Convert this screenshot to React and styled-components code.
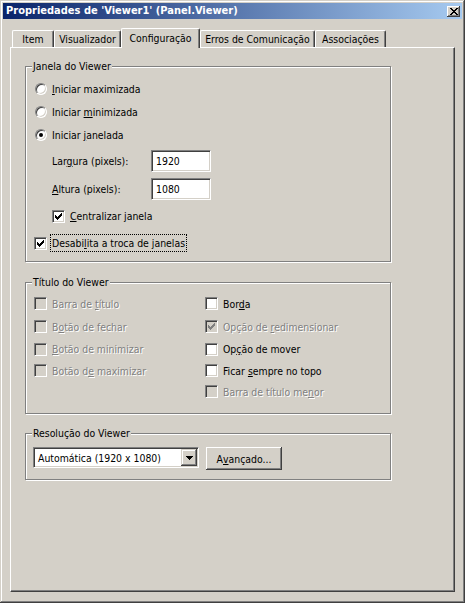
import React from "react";
import styled, { createGlobalStyle } from "styled-components";

const FACE = `"DejaVu Sans Condensed", "DejaVu Sans", "Liberation Sans", sans-serif`;

const Global = createGlobalStyle`
  html, body { margin: 0; padding: 0; background: #D4D0C8; }
  #root { width: 465px; height: 603px; }
  * { box-sizing: border-box; }
`;

const Window = styled.div`
  width: 465px;
  height: 603px;
  background: #d4d0c8;
  padding: 3px;
  display: flex;
  flex-direction: column;
  box-shadow: inset -1px -1px 0 #404040, inset 1px 1px 0 #d4d0c8,
    inset -2px -2px 0 #808080, inset 2px 2px 0 #ffffff;
  font-family: ${FACE};
  font-size: 10.4px;
  line-height: 12px;
  color: #000;
`;

const TitleBar = styled.div`
  flex: none;
  height: 16px;
  display: flex;
  align-items: center;
  justify-content: space-between;
  padding: 0 2px 0 3px;
  background: linear-gradient(to right, #0a246a, #a6caf0);
`;

const TitleText = styled.span`
  color: #fff;
  font-weight: bold;
  font-size: 11px;
  white-space: nowrap;
`;

const CloseButton = styled.div`
  width: 13px;
  height: 11px;
  background: #d4d0c8;
  box-shadow: inset -1px -1px 0 #404040, inset 1px 1px 0 #fff,
    inset -2px -2px 0 #808080;
  display: flex;
  align-items: center;
  justify-content: center;
`;

const Body = styled.div`
  flex: 1;
  display: flex;
  flex-direction: column;
  padding: 9px 7px 8px 7px;
`;

const TabRow = styled.div`
  flex: none;
  height: 19px;
  display: flex;
  align-items: flex-end;
  padding-left: 2px;
  position: relative;
  z-index: 1;
`;

const Tab = styled.div`
  width: ${(p) => p.$w}px;
  height: ${(p) => (p.$active ? 20 : 17)}px;
  margin-bottom: ${(p) => (p.$active ? -1 : 0)}px;
  padding-bottom: ${(p) => (p.$active ? 2 : 0)}px;
  background: #d4d0c8;
  border-top: 1px solid #fff;
  border-left: 1px solid #fff;
  border-right: 1px solid #404040;
  border-radius: 2px 2px 0 0;
  box-shadow: inset -1px 0 0 #808080;
  display: flex;
  align-items: center;
  justify-content: center;
  white-space: nowrap;
`;

const Panel = styled.div`
  flex: 1;
  border-top: 1px solid #fff;
  border-left: 1px solid #fff;
  border-right: 1px solid #404040;
  border-bottom: 1px solid #404040;
  box-shadow: inset -1px -1px 0 #808080;
  padding: 18px 14px;
  display: flex;
  flex-direction: column;
`;

const Group = styled.div`
  position: relative;
  width: 366px;
  border: 1px solid #808080;
  box-shadow: inset 1px 1px 0 #fff, 1px 1px 0 #fff;
  margin-top: ${(p) => p.$mt || 0}px;
  padding: ${(p) => p.$pad};
  display: flex;
  flex-direction: column;
`;

const Caption = styled.span`
  position: absolute;
  top: -7px;
  left: 6px;
  padding: 0 1px;
  background: #d4d0c8;
  line-height: 13px;
  white-space: nowrap;
`;

const OptionRow = styled.div`
  display: flex;
  align-items: center;
  height: ${(p) => (p.$h ? `${p.$h}px` : "100%")};
  margin-top: ${(p) => p.$mt || 0}px;
  padding-left: ${(p) => p.$indent || 0}px;
  color: ${(p) => (p.$disabled ? "#808080" : "#000")};
  text-shadow: ${(p) => (p.$disabled ? "1px 1px 0 #fff" : "none")};
  white-space: nowrap;
`;

const OptionLabel = styled.span`
  margin-left: ${(p) => (p.$focus ? 3 : 5)}px;
  padding: ${(p) => (p.$focus ? "2px 1px" : "0")};
  border: ${(p) => (p.$focus ? "1px dotted #000" : "none")};
`;

const Key = styled.u`
  text-decoration: underline;
  text-underline-offset: 1px;
`;

const CheckBoxBox = styled.span`
  flex: none;
  width: 13px;
  height: 13px;
  display: flex;
  align-items: center;
  justify-content: center;
  background: ${(p) => (p.$disabled ? "#d4d0c8" : "#fff")};
  border: 1px solid;
  border-color: #808080 #fff #fff #808080;
  box-shadow: inset 1px 1px 0 #404040, inset -1px -1px 0 #d4d0c8;
`;

const RadioCircle = styled.span`
  flex: none;
  width: 12px;
  height: 12px;
  margin-left: 1px;
  border-radius: 50%;
  background: #fff;
  border: 1px solid;
  border-color: #808080 #fff #fff #808080;
  box-shadow: inset 1px 1px 0 #404040, inset -1px -1px 0 #d4d0c8;
  display: flex;
  align-items: center;
  justify-content: center;
`;

const RadioDot = styled.span`
  width: 4px;
  height: 4px;
  border-radius: 50%;
  background: #000;
`;

const FieldRow = styled.div`
  display: flex;
  align-items: center;
  height: 22px;
  margin-top: ${(p) => p.$mt || 0}px;
  padding-left: 18px;
`;

const FieldLabel = styled.span`
  width: 99px;
  flex: none;
`;

const Sunken = styled.div`
  border: 1px solid;
  border-color: #808080 #fff #fff #808080;
  box-shadow: inset 1px 1px 0 #404040, inset -1px -1px 0 #d4d0c8;
  background: #fff;
`;

const TextBox = styled(Sunken)`
  width: 60px;
  height: 22px;
  padding-left: 4px;
  display: flex;
  align-items: center;
`;

const CheckGrid = styled.div`
  display: grid;
  grid-template-columns: 171px 1fr;
  grid-template-rows: 23px 23px 22px 21px 21px;
  grid-auto-flow: column;
`;

const ControlRow = styled.div`
  display: flex;
  align-items: flex-start;
  gap: 7px;
  height: 23px;
`;

const Combo = styled(Sunken)`
  width: 166px;
  height: 21px;
  display: flex;
  align-items: center;
  padding: 1px;
`;

const ComboText = styled.span`
  flex: 1;
  padding-left: 3px;
  white-space: nowrap;
`;

const DropButton = styled.span`
  width: 16px;
  height: 17px;
  background: #d4d0c8;
  box-shadow: inset -1px -1px 0 #404040, inset 1px 1px 0 #d4d0c8,
    inset -2px -2px 0 #808080, inset 2px 2px 0 #fff;
  display: flex;
  align-items: center;
  justify-content: center;
`;

const PushButton = styled.div`
  width: 76px;
  height: 23px;
  background: #d4d0c8;
  box-shadow: inset -1px -1px 0 #404040, inset 1px 1px 0 #fff,
    inset -2px -2px 0 #808080, inset 2px 2px 0 #d4d0c8;
  display: flex;
  align-items: center;
  justify-content: center;
  white-space: nowrap;
`;

const CheckMark = ({ color }) => (
  <svg width="7" height="7" viewBox="0 0 7 7" shapeRendering="crispEdges">
    {[2, 3, 4, 3, 2, 1, 0].map((y, x) => (
      <rect key={x} x={x} y={y} width="1" height="3" fill={color} />
    ))}
  </svg>
);

const CloseGlyph = () => (
  <svg width="8" height="7" viewBox="0 0 8 7" shapeRendering="crispEdges">
    {[0, 1, 2, 3, 4, 5, 6].map((r) => (
      <g key={r}>
        <rect x={r} y={r} width="2" height="1" fill="#000" />
        <rect x={6 - r} y={r} width="2" height="1" fill="#000" />
      </g>
    ))}
  </svg>
);

const DownArrow = () => (
  <svg width="7" height="4" viewBox="0 0 7 4" shapeRendering="crispEdges">
    <path d="M0 0h7v1H0zM1 1h5v1H1zM2 2h3v1H2zM3 3h1v1H3z" fill="#000" />
  </svg>
);

const Label = ({ parts }) =>
  parts.map((p, i) => (Array.isArray(p) ? <Key key={i}>{p[0]}</Key> : <React.Fragment key={i}>{p}</React.Fragment>));

const Check = ({ checked, disabled, parts, focus, mt, h, indent }) => (
  <OptionRow $disabled={disabled} $mt={mt} $h={h} $indent={indent}>
    <CheckBoxBox $disabled={disabled}>
      {checked && <CheckMark color={disabled ? "#808080" : "#000"} />}
    </CheckBoxBox>
    <OptionLabel $focus={focus}>
      <Label parts={parts} />
    </OptionLabel>
  </OptionRow>
);

const Radio = ({ checked, parts }) => (
  <OptionRow $h={23}>
    <RadioCircle>{checked && <RadioDot />}</RadioCircle>
    <OptionLabel>
      <Label parts={parts} />
    </OptionLabel>
  </OptionRow>
);

const tabs = [
  { label: "Item", w: 42 },
  { label: "Visualizador", w: 67 },
  { label: "Configuração", w: 79, active: true },
  { label: "Erros de Comunicação", w: 115 },
  { label: "Associações", w: 71 },
];

const leftChecks = [
  ["Barra de ", ["t"], "ítulo"],
  ["B", ["o"], "tão de fechar"],
  [["B"], "otão de minimizar"],
  ["Botão d", ["e"], " maximizar"],
];

const rightChecks = [
  { parts: ["Bor", ["d"], "a"] },
  { parts: ["Opção de ", ["r"], "edimensionar"], checked: true, disabled: true },
  { parts: ["Op", ["ç"], "ão de mover"] },
  { parts: ["Ficar ", ["s"], "empre no topo"] },
  { parts: ["Barra de título me", ["n"], "or"], disabled: true },
];

export default function App() {
  return (
    <>
      <Global />
      <Window>
        <TitleBar>
          <TitleText>Propriedades de 'Viewer1' (Panel.Viewer)</TitleText>
          <CloseButton>
            <CloseGlyph />
          </CloseButton>
        </TitleBar>
        <Body>
          <TabRow>
            {tabs.map((t) => (
              <Tab key={t.label} $w={t.w} $active={t.active}>
                {t.label}
              </Tab>
            ))}
          </TabRow>
          <Panel>
            <Group $pad="10px 8px 8px 8px">
              <Caption>Janela do Viewer</Caption>
              <Radio parts={[["I"], "niciar maximizada"]} />
              <Radio parts={["Iniciar ", ["m"], "inimizada"]} />
              <Radio checked parts={["Iniciar ", ["j"], "anelada"]} />
              <FieldRow $mt={4}>
                <FieldLabel>
                  <Label parts={["Lar", ["g"], "ura (pixels):"]} />
                </FieldLabel>
                <TextBox>1920</TextBox>
              </FieldRow>
              <FieldRow $mt={6}>
                <FieldLabel>
                  <Label parts={[["A"], "ltura (pixels):"]} />
                </FieldLabel>
                <TextBox>1080</TextBox>
              </FieldRow>
              <Check checked h={20} mt={6} indent={18} parts={[["C"], "entralizar janela"]} />
              <Check checked focus h={20} mt={7} parts={["Desabi", ["l"], "ita a troca de janelas"]} />
            </Group>

            <Group $mt={20} $pad="9px 8px 11px 8px">
              <Caption>Título do Viewer</Caption>
              <CheckGrid>
                {leftChecks.map((p, i) => (
                  <Check key={i} disabled parts={p} />
                ))}
                <span />
                {rightChecks.map((c, i) => (
                  <Check key={i} disabled={c.disabled} checked={c.checked} parts={c.parts} />
                ))}
              </CheckGrid>
            </Group>

            <Group $mt={19} $pad="13px 7px 9px 7px">
              <Caption>Resolução do Viewer</Caption>
              <ControlRow>
                <Combo>
                  <ComboText>Automática (1920 x 1080)</ComboText>
                  <DropButton>
                    <DownArrow />
                  </DropButton>
                </Combo>
                <PushButton>
                  <Label parts={["A", ["v"], "ançado..."]} />
                </PushButton>
              </ControlRow>
            </Group>
          </Panel>
        </Body>
      </Window>
    </>
  );
}
